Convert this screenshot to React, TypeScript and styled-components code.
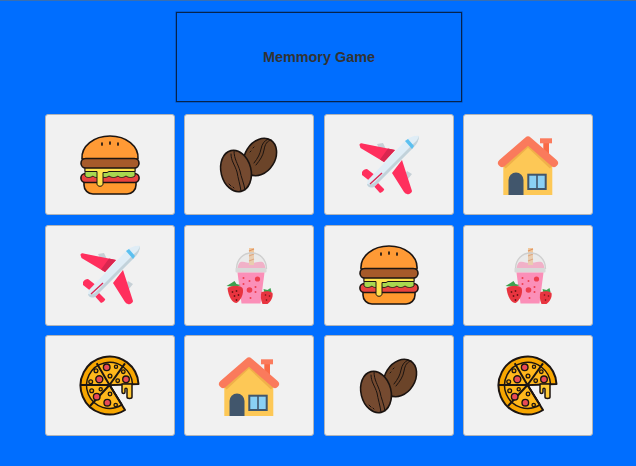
import styled, { createGlobalStyle } from "styled-components";

const GlobalStyle = createGlobalStyle`
  html, body {
    margin: 0;
    padding: 0;
    height: 100%;
    overflow: hidden;
    background: #006eff;
    font-family: "Liberation Sans", Arial, sans-serif;
  }
`;

const Page = styled.div`
  height: 466px;
  box-sizing: border-box;
  border-top: 1px solid #3a6fb0;
  display: flex;
  flex-direction: column;
  align-items: center;
  padding: 11px 0 0 2px;
`;

const Title = styled.div`
  width: 286px;
  height: 90px;
  box-sizing: border-box;
  border: 1px solid #06234d;
  box-shadow: 0 0 0 0.5px rgba(6, 35, 77, 0.5);
  display: flex;
  align-items: center;
  justify-content: center;
  color: #333;
  font-size: 14.4px;
  font-weight: 700;
`;

const Board = styled.div`
  margin-top: 12px;
  width: 548px;
  display: grid;
  grid-template-columns: repeat(4, 130px);
  grid-auto-rows: 101px;
  column-gap: 9.33px;
  row-gap: 9.6px;
`;

const Card = styled.div`
  box-sizing: border-box;
  background: #f1f1f1;
  border: 1px solid #b0b4b9;
  border-radius: 3px;
  display: flex;
  align-items: center;
  justify-content: center;
`;

const Art = styled.svg`
  width: 60px;
  height: 60px;
  display: block;
  overflow: visible;
  filter: blur(0.35px);
`;

const Burger = () => (
  <Art viewBox="0 0 60 60">
    <g stroke="#1c1512" strokeWidth="1.6" strokeLinejoin="round">
      <path d="M4 46h52v4a9 9 0 0 1-9 9H13a9 9 0 0 1-9-9z" fill="#ff9a2e" />
      <rect x="0.9" y="38.500" width="58.200" height="9" rx="4.500" fill="#e8443f" />
      <path d="M5 32h50v9c-3 2-6 2-9 0-3 2-6 2-8 0-3 2-6 2-9 0-3 2-5 2-8 0-3 2-6 2-8 0-3 2-6 2-8 0z" fill="#a8d84f" strokeWidth="0.900" />
      <path d="M5 32h50v4.500H29c-1 0-1 1-2 1h-4v11.500c0 3-6 3-6 0V36.500H5z" fill="#ffe14d" strokeWidth="1" />
      <path d="M2 24c-1-13 12-23 28-23s29 10 28 23z" fill="#ff9a35" />
      <rect x="1" y="23.500" width="58" height="9.500" rx="4.700" fill="#a65a2a" />
    </g>
    <path d="M22 8v2M30 7v2M38 8v2" stroke="#1c1512" strokeWidth="1.700" strokeLinecap="round" />
  </Art>
);

const Coffee = () => (
  <Art viewBox="0 0 60 60">
    <g stroke="#1a1310" strokeWidth="1.600">
      <ellipse cx="41" cy="22" rx="15" ry="20" fill="#6b4429" transform="rotate(32 41 22)" />
      <ellipse cx="17" cy="36" rx="15" ry="21" fill="#754a30" transform="rotate(-14 17 36)" />
    </g>
    <g fill="none" stroke="#1a1310" strokeWidth="1" strokeLinecap="round">
      <path d="M52 5c-4 1-6 4-7 10s-4 10-8 15" />
      <path d="M49 4c-4 2-6 5-7 10s-3 9-7 14" />
      <path d="M12 19c0 7 4 11 6 18 1 6 3 12 4 19" />
      <path d="M15 16c0 8 4 13 6 20 1 6 4 12 5 19" />
      <path d="M10 49l2 2M14 52l1 1M32 16l-1 1M35 12l-1 1" />
    </g>
  </Art>
);

const Plane = () => (
  <Art viewBox="0 0 60 60">
    <path d="M18 9l6-1 3 6-6 1zM48 36l5 3-4 5-4-3z" fill="#c6d0d6" />
    <path d="M0.500 10c0-1 1-2 3-1.500L36 15 25 27 1.500 13z" fill="#ff2f5d" />
    <path d="M36 15L25 27l-4-2.500 8-11z" fill="#d92650" />
    <path d="M33 38l10-13 10 31c0 2-4 4-5 3-1 0-2-1-3-2z" fill="#ff2f5d" />
    <path d="M3 37c1-2 3-3 5-3l9 7-5 6-9-7z" fill="#ff2f5d" />
    <path d="M16 45l9 9c1 1-3 4-4 4l-9-10z" fill="#ff2f5d" />
    <path d="M9 45L46 6c4-4 10-6 14-5 0 4-2 8-5 11L16 51c-3 3-8 1-8-2z" fill="#dfedf6" />
    <path d="M60 1c0 4-2 8-5 11L16 51c-3 3-8 1-8-2 3 1 6 0 8-2L54 9c3-2 5-5 6-8z" fill="#c2d2da" />
    <path d="M46 6l3-2 6 7-2 3z" fill="#5bc0f0" />
    <path d="M11 49l12-11" stroke="#d92650" strokeWidth="1.300" />
  </Art>
);

const House = () => (
  <Art viewBox="0 0 60 60">
    <rect x="45.300" y="8" width="5.700" height="20" fill="#f96a46" />
    <rect x="42" y="3.300" width="12" height="5" fill="#fb7b5d" />
    <path d="M5.300 30L30 9l24.300 21v30H5.300z" fill="#fdc856" />
    <path d="M5.300 31L30 8l24.300 23" fill="none" stroke="#f0b04a" strokeWidth="7" />
    <path d="M4 28L30 5.500 56 28" fill="none" stroke="#fa7a5c" strokeWidth="8" strokeLinecap="round" strokeLinejoin="round" />
    <path d="M10.500 60V45a7.500 7.500 0 0 1 15 0v15z" fill="#41566c" />
    <rect x="29.300" y="38.700" width="19.400" height="16.300" fill="#41566c" />
    <rect x="31.300" y="40.700" width="6.900" height="12.300" fill="#8ad0f4" />
    <rect x="39.800" y="40.700" width="6.900" height="12.300" fill="#8ad0f4" />
  </Art>
);

const Smoothie = () => (
  <Art viewBox="0 0 60 60">
    <g transform="translate(5.500 0)">
      <path d="M13 24c0-2 1-6 3-7 4-1 6 1 10 1s8-2 12-1c2 1 3 5 3 7z" fill="#fb9fc0" />
      <rect x="24.500" y="3" width="5" height="17" fill="#f0c89e" />
      <path d="M24.500 6l5-2M24.500 11l5-2M24.500 16l5-2" stroke="#e0935f" strokeWidth="1.200" />
      <path d="M12 24c0-10 7-16 15-16s15 6 15 16" fill="#d9d9d9" fillOpacity="0.300" stroke="#cfcfcf" strokeWidth="1.400" />
      <rect x="11" y="23" width="31" height="4.500" rx="1" fill="#d8d8d8" />
      <path d="M13 27.500h27l-4 31H17z" fill="#fb8fb8" />
      <g fill="#ee3d4e">
        <circle cx="33" cy="34" r="2.600" />
        <circle cx="25" cy="45" r="2.800" />
        <circle cx="19" cy="33" r="1" />
        <circle cx="19" cy="39" r="1" />
        <circle cx="25" cy="36" r="1" />
        <circle cx="31" cy="42" r="1" />
        <circle cx="31" cy="47" r="1" />
        <circle cx="26" cy="53" r="1" />
      </g>
      <path d="M2 41l5-3 3-2 2 3 4 1-4 2z" fill="#3da24f" />
      <path d="M3 43c5-3 12-3 15 0 2 5-2 13-6 15-4 0-8-6-9-15z" fill="#e8343f" />
      <g fill="#6d1416">
        <circle cx="8" cy="47" r="0.900" />
        <circle cx="12" cy="46" r="0.900" />
        <circle cx="10" cy="51" r="0.900" />
        <circle cx="14" cy="50" r="0.900" />
        <circle cx="12" cy="55" r="0.900" />
      </g>
      <path d="M39 44l4 1 3-2 1 4-7 1z" fill="#3da24f" />
      <path d="M37 47c4-1 9-1 11 1 1 4-2 9-5 11h-5c-2-4-2-9-1-12z" fill="#e8343f" />
      <g fill="#6d1416">
        <circle cx="41" cy="50" r="0.800" />
        <circle cx="45" cy="51" r="0.800" />
        <circle cx="42" cy="55" r="0.800" />
      </g>
    </g>
  </Art>
);

const Pizza = () => (
  <Art viewBox="0 0 60 60">
    <g stroke="#1c1512" strokeWidth="2" strokeLinejoin="round">
      <path d="M29.500 29L58.500 28A29 29 0 1 0 45 54z" fill="#f7a600" />
      <path d="M29.500 29L52.500 28A23 23 0 1 0 41.800 48.900z" fill="#ffb81c" strokeWidth="1.500" />
      <path d="M42 28v8c0 2 3 2 3 0v-3c0-1 2-1 2 0v8c0 2 5 2 5 0V28z" fill="#ffc933" strokeWidth="1.500" />
      <path d="M29.500 29L16.700 7.300M29.500 29L45 7.300M29.500 29L0.500 29M29.500 29L10 50M29.500 29L41.800 48.900" fill="none" />
    </g>
    <g fill="#e84b55" stroke="#1c1512" strokeWidth="1.400">
      <circle cx="26.700" cy="11.300" r="3.300" />
      <circle cx="19.300" cy="23.300" r="3.500" />
      <circle cx="46" cy="23.300" r="3.300" />
      <circle cx="16.700" cy="40.700" r="3.300" />
      <circle cx="27.300" cy="46.700" r="3.300" />
    </g>
    <g fill="#f7a600" stroke="#1c1512" strokeWidth="1.300">
      <circle cx="16" cy="14.700" r="1.900" />
      <circle cx="36" cy="10.700" r="1.600" />
      <circle cx="43.300" cy="15.700" r="1.800" />
      <circle cx="30" cy="20" r="1.900" />
      <circle cx="37.700" cy="24.700" r="1.800" />
      <circle cx="10.700" cy="25.700" r="1.900" />
      <circle cx="11.700" cy="34.700" r="1.900" />
      <circle cx="20.700" cy="33.300" r="1.600" />
      <circle cx="30" cy="38" r="1.800" />
      <circle cx="35.700" cy="49" r="1.700" />
    </g>
  </Art>
);

const cards = [
  Burger, Coffee, Plane, House,
  Plane, Smoothie, Burger, Smoothie,
  Pizza, House, Coffee, Pizza,
];

export default function App() {
  return (
    <>
      <GlobalStyle />
      <Page>
        <Title>Memmory Game</Title>
        <Board>
          {cards.map((Icon, i) => (
            <Card key={i}>
              <Icon />
            </Card>
          ))}
        </Board>
      </Page>
    </>
  );
}
